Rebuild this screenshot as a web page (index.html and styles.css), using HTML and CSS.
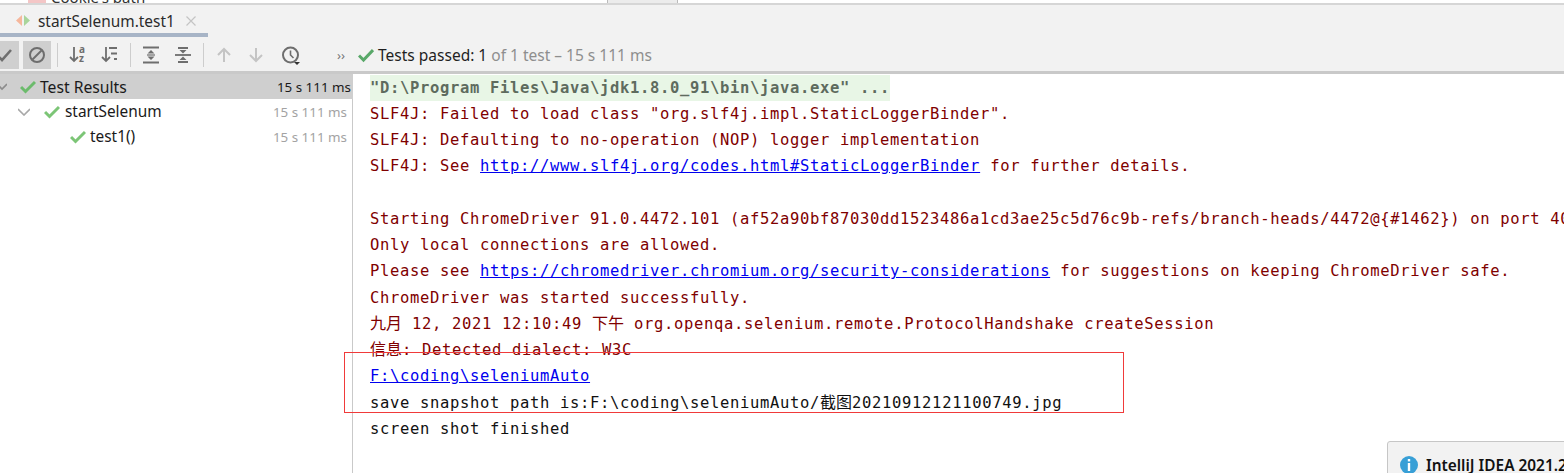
FILE: index.html
```html
<!DOCTYPE html>
<html lang="en">
<head>
<meta charset="utf-8">
<title>startSelenum.test1</title>
<link rel="stylesheet" href="styles.css">
</head>
<body>
<div class="app">
  <div class="topstrip">
    <span class="topicon"></span>
    <span class="toptext">Cookie's path</span>
    <span class="toptab"></span>
  </div>
  <div class="tabbar">
    <div class="tab">
      <svg class="tabicon" width="16" height="16" viewBox="0 0 16 16"><path d="M7 2v11L1 7.500z" fill="#f6b79c"/><path d="M9 2v11l6-5.500z" fill="#a9d59b"/></svg>
      <span class="tabname">startSelenum.test1</span>
      <svg class="tabclose" width="12" height="12" viewBox="0 0 12 12"><path d="M1.500 1.500l9 9M10.500 1.500l-9 9" stroke="#c4c4c4" stroke-width="1.200" fill="none"/></svg>
    </div>
  </div>
  <div class="toolbar">
    <div class="tools">
      <span class="tool on"><svg width="20" height="20" viewBox="0 0 20 20"><path d="M2 10l5 5 9-10" stroke="#6e6e6e" stroke-width="2.600" fill="none"/></svg></span>
      <span class="tool on"><svg width="20" height="20" viewBox="0 0 20 20"><circle cx="10" cy="10" r="7" stroke="#6e6e6e" stroke-width="2" fill="none"/><path d="M5.500 14.500l9-9" stroke="#6e6e6e" stroke-width="2"/></svg></span>
      <span class="sep"></span>
      <span class="tool"><svg width="20" height="20" viewBox="0 0 20 20"><path d="M6 2v14M2 12l4 4 4-4" stroke="#6e6e6e" stroke-width="1.800" fill="none"/><text x="11" y="8" class="az">a</text><text x="11" y="17" class="az">z</text></svg></span>
      <span class="tool"><svg width="20" height="20" viewBox="0 0 20 20"><path d="M6 2v14M2 12l4 4 4-4" stroke="#6e6e6e" stroke-width="1.800" fill="none"/><path d="M9 3h8M11 8.500h6M14 14h3" stroke="#6e6e6e" stroke-width="2" fill="none"/></svg></span>
      <span class="sep"></span>
      <span class="tool"><svg width="20" height="20" viewBox="0 0 20 20"><path d="M2 2.500h16M2 17.500h16" stroke="#6e6e6e" stroke-width="1.800"/><path d="M10 5l3.500 3.500h-7zM10 15l3.500-3.500h-7z" fill="#6e6e6e"/><path d="M6 10h8" stroke="#6e6e6e" stroke-width="1.200"/></svg></span>
      <span class="tool"><svg width="20" height="20" viewBox="0 0 20 20"><path d="M2 10h16" stroke="#6e6e6e" stroke-width="1.800"/><path d="M5 3h10M5 17h10" stroke="#6e6e6e" stroke-width="1.800"/><path d="M10 8.500l-3.500-3.500h7zM10 11.500l3.500 3.500h-7z" fill="#6e6e6e"/></svg></span>
      <span class="sep"></span>
      <span class="tool"><svg width="20" height="20" viewBox="0 0 20 20"><path d="M10 17V4M4 10l6-6 6 6" stroke="#c4c4c4" stroke-width="2" fill="none"/></svg></span>
      <span class="tool"><svg width="20" height="20" viewBox="0 0 20 20"><path d="M10 3v13M4 10l6 6 6-6" stroke="#c4c4c4" stroke-width="2" fill="none"/></svg></span>
      <span class="tool"><svg width="24" height="24" viewBox="0 0 24 24"><circle cx="14.500" cy="12" r="7.500" stroke="#6e6e6e" stroke-width="2" fill="none"/><path d="M14.500 7.500V12l3 3" stroke="#6e6e6e" stroke-width="1.600" fill="none"/><path d="M18 19h6l-3 3z" fill="#333"/></svg></span>
    </div>
    <span class="more">››</span>
    <svg class="check" width="16" height="16" viewBox="0 0 16 16"><path d="M1 8.500l4.500 4.500L15 3" stroke="#59a869" stroke-width="3" fill="none"/></svg>
    <span class="status">Tests passed: 1 <span class="dim">of 1 test – 15 s 111 ms</span></span>
  </div>
  <div class="main">
    <div class="tree">
      <div class="row root">
        <svg class="caret" width="10" height="8" viewBox="0 0 10 8"><path d="M0 1l5 5 5-5" stroke="#8c8c8c" stroke-width="1.600" fill="none"/></svg>
        <svg class="tick" width="16" height="14" viewBox="0 0 16 14"><path d="M1 7l4.500 4.500L15 2" stroke="#6cbb6c" stroke-width="3" fill="none"/></svg>
        <span class="name">Test Results</span><span class="time">15 s 111 ms</span>
      </div>
      <div class="row suite">
        <svg class="caret" width="12" height="8" viewBox="0 0 12 8"><path d="M0 1l6 6 6-6" stroke="#a8a8a8" stroke-width="1.600" fill="none"/></svg>
        <svg class="tick" width="16" height="14" viewBox="0 0 16 14"><path d="M1 7l4.500 4.500L15 2" stroke="#7cc576" stroke-width="3" fill="none"/></svg>
        <span class="name">startSelenum</span><span class="time">15 s 111 ms</span>
      </div>
      <div class="row leaf">
        <svg class="tick" width="16" height="14" viewBox="0 0 16 14"><path d="M1 7l4.500 4.500L15 2" stroke="#7cc576" stroke-width="3" fill="none"/></svg>
        <span class="name">test1()</span><span class="time">15 s 111 ms</span>
      </div>
    </div>
    <div class="console">
      <div class="line cmd"><span class="cmdtext">"D:\Program Files\Java\jdk1.8.0_91\bin\java.exe" ...</span></div>
      <div class="line err">SLF4J: Failed to load class "org.slf4j.impl.StaticLoggerBinder".</div>
      <div class="line err">SLF4J: Defaulting to no-operation (NOP) logger implementation</div>
      <div class="line err">SLF4J: See <a class="link">http://www.slf4j.org/codes.html#StaticLoggerBinder</a> for further details.</div>
      <div class="line err">&nbsp;</div>
      <div class="line err">Starting ChromeDriver 91.0.4472.101 (af52a90bf87030dd1523486a1cd3ae25c5d76c9b-refs/branch-heads/4472@{#1462}) on port 40000</div>
      <div class="line err">Only local connections are allowed.</div>
      <div class="line err">Please see <a class="link">https://chromedriver.chromium.org/security-considerations</a> for suggestions on keeping ChromeDriver safe.</div>
      <div class="line err">ChromeDriver was started successfully.</div>
      <div class="line err"><span class="cjk">九月</span> 12, 2021 12:10:49 <span class="cjk">下午</span> org.openqa.selenium.remote.ProtocolHandshake createSession</div>
      <div class="line err"><span class="cjk">信息</span>: Detected dialect: W3C</div>
      <div class="line"><a class="link">F:\coding\seleniumAuto</a></div>
      <div class="line">save snapshot path is:F:\coding\seleniumAuto/<span class="cjk">截图</span>20210912121100749.jpg</div>
      <div class="line">screen shot finished</div>
    </div>
  </div>
  <div class="redbox"></div>
  <div class="notice">
    <svg class="info" width="18" height="18" viewBox="0 0 18 18"><circle cx="9" cy="9" r="9" fill="#389fd6"/><rect x="7.800" y="3" width="2.400" height="2.400" fill="#fff"/><rect x="7.800" y="7" width="2.400" height="8" fill="#fff"/></svg>
    <span class="noticetext">IntelliJ IDEA 2021.2</span>
  </div>
</div>
</body>
</html>
```
FILE: styles.css
```css
* { box-sizing: border-box; }
html, body { margin: 0; padding: 0; }
body { width: 1564px; height: 473px; overflow: hidden; background: #fff; font-family: "Noto Sans", "Open Sans", sans-serif; }
.app { position: relative; width: 1564px; height: 473px; overflow: hidden; display: flex; flex-direction: column; background: #fff; }
.topstrip { height: 5px; background: #fff; border-bottom: 2px solid #d6d6d6; flex: none; display: flex; align-items: flex-start; overflow: hidden; }
.topicon { width: 18px; height: 3px; background: #f4c6c6; margin-left: 28px; flex: none; }
.toptext { font-size: 15px; line-height: 11px; height: 3px; margin-left: 5px; color: #333; width: 96px; white-space: nowrap; display: flex; align-items: flex-end; flex: none; overflow: hidden; }
.toptab { width: 71px; height: 3px; background: #ececec; border-left: 1px solid #bbb; border-right: 1px solid #bbb; margin-left: 460px; flex: none; }
.tabbar { height: 32px; background: #f2f2f2; flex: none; display: flex; }
.tab { width: 208px; height: 32px; display: flex; align-items: center; border-bottom: 4px solid #a7b4c6; padding-left: 15px; }
.tabicon { flex: none; margin-top: 3px; }
.tabname { font-size: 15.400px; color: #2b2b2b; margin-left: 7px; margin-top: 4px; white-space: nowrap; }
.tabclose { margin-left: 10px; margin-top: 4px; flex: none; }
.toolbar { height: 37px; background: #f2f2f2; border-bottom: 3px solid #c9c9c9; padding-top: 1px; flex: none; display: flex; align-items: center; }
.tools { display: flex; align-items: center; margin-left: -11px; width: 348px; flex: none; }
.tool { width: 28px; height: 28px; margin: 0 2px; display: flex; align-items: center; justify-content: center; flex: none; }
.tool.on { background: #cfcfcf; }
.az { font: 700 10px "Noto Sans", sans-serif; fill: #6e6e6e; }
.sep { width: 1px; height: 24px; background: #cdcdcd; margin: 0 4px; flex: none; }
.more { color: #777; font-size: 13px; }
.check { margin-left: 13px; flex: none; }
.status { font-size: 15.500px; color: #1f1f1f; margin-left: 4px; white-space: nowrap; }
.dim { color: #8e8e8e; }
.main { flex: 1; display: flex; min-height: 0; }
.tree { width: 353px; flex: none; border-right: 1px solid #c9c9c9; }
.row { height: 25px; display: flex; align-items: center; position: relative; font-size: 15.400px; color: #1a1a1a; }
.row .time { margin-left: auto; color: #a3a3a3; font-size: 13.400px; padding-right: 5px; white-space: nowrap; }
.row svg { flex: none; }
.root { background: #cfcfcf; margin-right: -1px; font-size: 15.700px; }
.root .time { color: #1a1a1a; padding-right: 2px; }
.root .caret { margin-left: -3px; }
.root .tick { margin-left: 13px; margin-right: 4px; }
.suite .caret { margin-left: 18px; }
.suite .tick { margin-left: 14px; margin-right: 5px; }
.leaf .tick { margin-left: 70px; margin-right: 4px; }
.console { flex: 1; min-width: 0; padding: 0.500px 0 0 17px; font-family: "DejaVu Sans Mono", "Noto Sans CJK SC", monospace; font-size: 15.500px; letter-spacing: 0.670px; color: #111; white-space: nowrap; overflow: hidden; }
.line { height: 26.250px; line-height: 26.250px; }
.err { color: #7f0000; }
.cmd { color: #5e6b5e; font-weight: 700; }
.cmdtext { background: #e8f6e6; display: inline-block; width: 520px; }
.link { color: #0000ee; text-decoration: underline; }
.cjk { font-family: "Noto Sans CJK SC", sans-serif; font-size: 16px; letter-spacing: 0; line-height: 1; }
.redbox { position: absolute; left: 344px; top: 352px; width: 780px; height: 61px; border: 1px solid #f03a3a; pointer-events: none; }
.notice { position: absolute; left: 1387px; top: 441px; width: 200px; height: 50px; background: #f2f2f2; border: 1px solid #c6c6c6; border-radius: 3px; display: flex; align-items: flex-start; padding: 14px 0 0 12px; }
.info { flex: none; }
.noticetext { font-size: 15.400px; font-weight: 600; color: #111; margin-left: 8px; white-space: nowrap; line-height: 20px; }
```
